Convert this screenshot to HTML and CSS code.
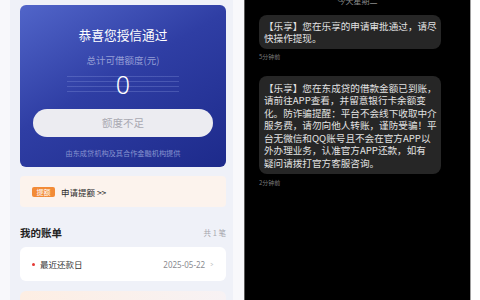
FILE: index.html
```html
<!DOCTYPE html>
<html lang="zh-CN">
<head>
<meta charset="utf-8">
<link rel="stylesheet" href="styles.css">
</head>
<body>
<div class="left">
  <div class="col">
    <div class="credit-card">
      <div class="cc-title">恭喜您授信通过</div>
      <div class="cc-sub">总计可借额度(元)</div>
      <div class="cc-amount"><span>0</span></div>
      <div class="cc-btn">额度不足</div>
      <div class="cc-foot">由东成贷机构及其合作金融机构提供</div>
    </div>
    <div class="notice">
      <span class="badge">提额</span>
      <span class="notice-text">申请提额 &gt;&gt;</span>
    </div>
    <div class="bill-head">
      <span class="bill-title">我的账单</span>
      <span class="bill-count">共 1 笔</span>
    </div>
    <div class="bill-card">
      <span class="dot"></span>
      <span class="bill-label">最近还款日</span>
      <span class="bill-date">2025-05-22</span>
      <span class="chev">&gt;</span>
    </div>
    <div class="next-card"></div>
  </div>
</div>
<div class="phone">
  <div class="date">今天星期二</div>
  <div class="bubble b1">【乐享】您在乐享的申请审批通过，请尽<br>快操作提现。</div>
  <div class="time">5分钟前</div>
  <div class="bubble b2">【乐享】您在东成贷的借款金额已到账，<br>请前往APP查看，并留意银行卡余额变<br>化。防诈骗提醒：平台不会线下收取中介<br>服务费，请勿向他人转账，谨防受骗！平<br>台无微信和QQ账号且不会在官方APP以<br>外办理业务，认准官方APP还款，如有<br>疑问请拨打官方客服咨询。</div>
  <div class="time">2分钟前</div>
</div>
<div class="edge"></div>
</body>
</html>
```

FILE: styles.css
```css
html, body {
  margin: 0;
  padding: 0;
}
body {
  width: 480px;
  height: 300px;
  overflow: hidden;
  display: flex;
  background: #f8f8fb;
  font-family: "Noto Sans CJK SC", "Noto Sans", sans-serif;
}
.left {
  width: 244px;
  height: 300px;
  flex: none;
  padding-left: 10px;
  box-sizing: border-box;
  overflow: hidden;
}
.col {
  width: 223px;
  height: 300px;
  box-sizing: border-box;
  padding: 5px 7px 0 10px;
  background: #eff1f8;
  overflow: hidden;
}
.credit-card {
  height: 162px;
  border-radius: 6px;
  background: linear-gradient(150deg, #5165c9 0%, #2f3ea4 45%, #1d2a8b 100%);
  box-sizing: border-box;
  padding-top: 22px;
  display: flex;
  flex-direction: column;
  align-items: center;
}
.cc-title {
  color: #ffffff;
  font-size: 12.7px;
  line-height: 16px;
}
.cc-sub {
  margin-top: 11px;
  color: #959fd6;
  font-size: 9.5px;
  line-height: 12px;
}
.cc-amount {
  margin-top: 6px;
  width: 112px;
  height: 24px;
  display: flex;
  align-items: center;
  justify-content: center;
  background: repeating-linear-gradient(to bottom, transparent 0, transparent 4px, rgba(150, 165, 230, 0.28) 4px, rgba(150, 165, 230, 0.28) 5px);
}
.cc-amount span {
  color: #ffffff;
  font-family: "Noto Sans", sans-serif;
  font-weight: 300;
  font-size: 25px;
  line-height: 24px;
}
.cc-btn {
  margin-top: 13px;
  width: 180px;
  height: 28px;
  border-radius: 14px;
  background: #ececf1;
  color: #a9a9b2;
  font-size: 10.5px;
  line-height: 28px;
  text-align: center;
}
.cc-foot {
  margin-top: 11px;
  color: #8793cf;
  font-size: 7.2px;
  line-height: 10px;
}
.notice {
  margin-top: 9px;
  height: 31px;
  border-radius: 4px;
  background: #fcf3ed;
  display: flex;
  align-items: center;
  padding-left: 12px;
}
.badge {
  width: 23px;
  height: 10px;
  border-radius: 2px;
  background: #f28b37;
  color: #ffffff;
  font-size: 7px;
  line-height: 10px;
  text-align: center;
}
.notice-text {
  margin-left: 6px;
  color: #2a2a2a;
  font-size: 8.5px;
}
.bill-head {
  margin-top: 18px;
  height: 14px;
  display: flex;
  align-items: center;
  justify-content: space-between;
}
.bill-title {
  font-size: 10.5px;
  font-weight: 700;
  color: #222222;
}
.bill-count {
  font-size: 7.5px;
  color: #a6a6ad;
}
.bill-card {
  margin-top: 8px;
  height: 34px;
  border-radius: 6px;
  background: #ffffff;
  display: flex;
  align-items: center;
  padding: 0 12px;
}
.dot {
  width: 3px;
  height: 3px;
  border-radius: 50%;
  background: #e53935;
}
.bill-label {
  margin-left: 5px;
  font-size: 8.5px;
  color: #333333;
}
.bill-date {
  margin-left: auto;
  font-size: 8px;
  color: #8a8a90;
  font-family: "Noto Sans", sans-serif;
}
.chev {
  margin-left: 5px;
  font-size: 7px;
  color: #bbbbbb;
  transform: scaleX(0.7);
}
.next-card {
  margin-top: 10px;
  height: 20px;
  border-radius: 6px;
  background: linear-gradient(90deg, #fdeee3 0%, #f7f2f4 100%);
}
.phone {
  width: 227px;
  flex: none;
  height: 300px;
  box-sizing: border-box;
  background: #000000;
  border-left: 1px solid #5a5a5a;
  border-right: 1px solid #a0a0a0;
  padding-left: 14px;
  overflow: hidden;
}
.date {
  margin-top: -4px;
  height: 10px;
  line-height: 10px;
  font-size: 8px;
  color: #8a8a8a;
  text-align: center;
  padding-right: 14px;
}
.bubble {
  width: 182px;
  box-sizing: border-box;
  background: #262626;
  border-radius: 8px;
  color: #e2e2e2;
  font-size: 9.6px;
  line-height: 12.5px;
  padding: 4.5px 4px 4.5px 5px;
  white-space: nowrap;
}
.b1 {
  margin-top: 9px;
}
.b2 {
  margin-top: 15px;
  padding-top: 5.5px;
  padding-bottom: 5px;
}
.time {
  margin-top: 4px;
  font-size: 6px;
  line-height: 8px;
  color: #7a7a7a;
}
.b2 + .time {
  margin-top: 5px;
}
.edge {
  flex: 1;
  background: #ffffff;
}
```
